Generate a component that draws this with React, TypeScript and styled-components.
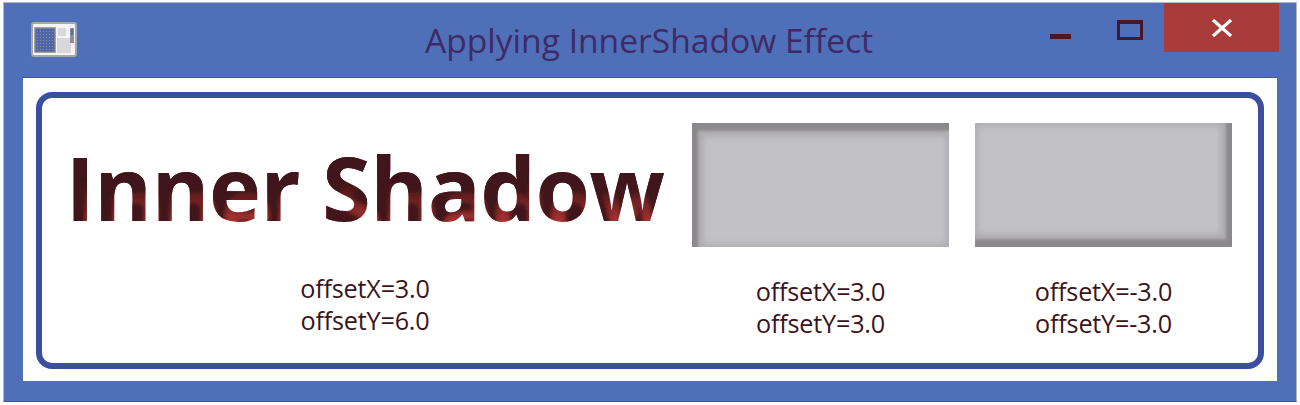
import React from 'react';
import styled, { createGlobalStyle } from 'styled-components';

const GlobalStyle = createGlobalStyle`
    html, body {
        margin: 0;
        padding: 0;
        background: #FFF;
    }
    body {
        font-family: "Open Sans", "Noto Sans", sans-serif;
    }
`;

const WindowFrame = styled.div`
    width: 1294px;
    height: 400px;
    margin: 2px 0 0 3px;
    box-sizing: border-box;
    background: #4f6fb8;
    border: 1px solid #b4b8c4;
    border-bottom-color: #3f57a4;
    padding: 0 19px 20px 19px;
    display: flex;
    flex-direction: column;
`;

const TitleBar = styled.div`
    height: 75px;
    flex: none;
    display: flex;
    align-items: flex-start;
    position: relative;
`;

const AppIcon = styled.svg`
    width: 46px;
    height: 36px;
    margin: 19px 0 0 8px;
`;

const Title = styled.div`
    position: absolute;
    left: 402px;
    top: 16px;
    font-size: 33.6px;
    line-height: 42px;
    color: #3e2a66;
    white-space: nowrap;
`;

const Controls = styled.div`
    margin-left: auto;
    margin-right: -2px;
    display: flex;
    align-items: flex-start;
`;

const Minimize = styled.div`
    width: 21px;
    height: 5px;
    margin-top: 31px;
    background: #45182c;
`;

const Maximize = styled.div`
    width: 26px;
    height: 20px;
    box-sizing: border-box;
    margin: 17px 21px 0 46px;
    border: 3px solid #45182c;
    border-top-width: 4px;
`;

const CloseButton = styled.div`
    width: 115px;
    height: 49px;
    background: #a93b3b;
    display: flex;
    align-items: center;
    justify-content: center;
`;

const ClientArea = styled.div`
    flex: 1;
    background: #FFF;
    box-shadow: 0 -1px 0 #3f57a4;
    padding: 14px 13px 12px 13px;
    display: flex;
`;

const Panel = styled.div`
    flex: 1;
    box-sizing: border-box;
    border: 6px solid #3b4f9f;
    border-radius: 16px;
    display: flex;
    padding: 25px 25px 0 27px;
`;

const HeadingColumn = styled.div`
    width: 592px;
    margin-right: 31px;
    display: flex;
    flex-direction: column;
    align-items: center;
`;

const Heading = styled.div`
    height: 140px;
    font-size: 88px;
    line-height: 129px;
    letter-spacing: -0.5px;
    font-weight: 700;
    color: transparent;
    background: linear-gradient(to bottom, #40181a 42%, #a83434 70%);
    -webkit-background-clip: text;
    background-clip: text;
    white-space: nowrap;
    filter: url(#inner-shadow);
`;

const Column = styled.div<{ $gap?: number }>`
    width: 257px;
    margin-right: ${(props) => props.$gap ?? 0}px;
    display: flex;
    flex-direction: column;
    align-items: center;
`;

const ShadowBox = styled.div<{ $x: number; $y: number }>`
    width: 100%;
    height: 124px;
    background: #c1c1c6;
    box-shadow:
        inset ${(props) => props.$x * 2}px ${(props) => props.$y * 2.6}px 3px 0 #8c898e,
        inset ${(props) => props.$x * 4}px ${(props) => props.$y * 4.6}px 5px 0 #b0aeb1,
        inset 0 0 5px 4px #b3b1b4;
`;

const Caption = styled.div<{ $top: number }>`
    margin-top: ${(props) => props.$top}px;
    font-size: 25.2px;
    line-height: 32px;
    letter-spacing: -0.2px;
    color: #3a1520;
    text-align: center;
    white-space: nowrap;
`;

const boxes = [
    { x: 3, y: 3, gap: 26, caption: ['offsetX=3.0', 'offsetY=3.0'] },
    { x: -3, y: -3, gap: 0, caption: ['offsetX=-3.0', 'offsetY=-3.0'] },
];

export default function App() {
    return (
        <>
            <GlobalStyle />
            <svg width="0" height="0" style={{ position: 'absolute' }}>
                <filter id="inner-shadow" x="-5%" y="-5%" width="110%" height="110%">
                    <feComponentTransfer in="SourceAlpha" result="inverse">
                        <feFuncA type="table" tableValues="1 0" />
                    </feComponentTransfer>
                    <feOffset in="inverse" dx="12" dy="20" result="moved" />
                    <feGaussianBlur in="moved" stdDeviation="2" result="soft" />
                    <feFlood floodColor="#40181a" />
                    <feComposite in2="soft" operator="in" result="shadow" />
                    <feComposite in="shadow" in2="SourceAlpha" operator="in" result="inside" />
                    <feMerge>
                        <feMergeNode in="SourceGraphic" />
                        <feMergeNode in="inside" />
                    </feMerge>
                </filter>
                <pattern id="icon-dots" width="3" height="3" patternUnits="userSpaceOnUse">
                    <rect width="3" height="3" fill="#4f66a8" />
                    <rect width="1" height="1" fill="#8d8f98" />
                </pattern>
            </svg>
            <WindowFrame>
                <TitleBar>
                    <AppIcon viewBox="0 0 46 36">
                        <rect x="1" y="1" width="44" height="33" rx="2" fill="#f4f4f6" stroke="#a5a7ad" strokeWidth="2" />
                        <rect x="4" y="6" width="20" height="24" fill="url(#icon-dots)" stroke="#85858c" strokeWidth="1.5" />
                        <rect x="27" y="6" width="8" height="8" fill="#d8d8dc" />
                        <rect x="26" y="16" width="14" height="15" fill="#d8d8dc" />
                        <rect x="39" y="6" width="4" height="15" fill="#8e9096" />
                        <rect x="40" y="7" width="2" height="6" fill="#4f6fb8" />
                    </AppIcon>
                    <Title>Applying InnerShadow Effect</Title>
                    <Controls>
                        <Minimize />
                        <Maximize />
                        <CloseButton>
                            <svg width="22" height="18" viewBox="0 0 22 18">
                                <path d="M2 1 L20 17 M20 1 L2 17" stroke="#FFF" strokeWidth="3.2" fill="none" />
                            </svg>
                        </CloseButton>
                    </Controls>
                </TitleBar>
                <ClientArea>
                    <Panel>
                        <HeadingColumn>
                            <Heading>Inner Shadow</Heading>
                            <Caption $top={9}>
                                offsetX=3.0
                                <br />
                                offsetY=6.0
                            </Caption>
                        </HeadingColumn>
                        {boxes.map((box) => (
                            <Column key={box.x} $gap={box.gap}>
                                <ShadowBox $x={box.x} $y={box.y} />
                                <Caption $top={28}>
                                    {box.caption[0]}
                                    <br />
                                    {box.caption[1]}
                                </Caption>
                            </Column>
                        ))}
                    </Panel>
                </ClientArea>
            </WindowFrame>
        </>
    );
}
